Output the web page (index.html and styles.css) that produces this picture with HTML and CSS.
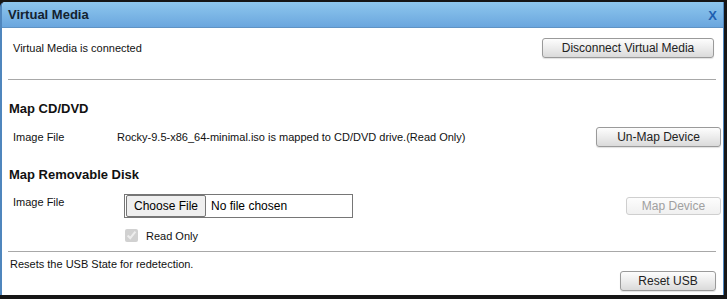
FILE: index.html
```html
<!DOCTYPE html>
<html lang="en">
<head>
    <meta charset="UTF-8">
    <meta name="viewport" content="width=device-width, initial-scale=1.0">
    <title>Virtual Media</title>
    <link rel="stylesheet" href="styles.css">
</head>
<body>
    <div class="dialog">
        <div class="titlebar">
            <span class="title">Virtual Media</span>
            <span class="close">X</span>
        </div>
        <div class="content">
            <div class="row status-row">
                <span class="status">Virtual Media is connected</span>
                <button class="btn btn-disconnect">Disconnect Virtual Media</button>
            </div>
            <hr class="sep">

            <h2 class="section">Map CD/DVD</h2>
            <div class="row cd-row">
                <span class="label">Image File</span>
                <span class="mapped">Rocky-9.5-x86_64-minimal.iso is mapped to CD/DVD drive.(Read Only)</span>
                <button class="btn btn-unmap">Un-Map Device</button>
            </div>

            <h2 class="section">Map Removable Disk</h2>
            <div class="row disk-row">
                <span class="label">Image File</span>
                <div class="file-box">
                    <span class="file-btn">Choose File</span>
                    <span class="file-name">No file chosen</span>
                </div>
                <button class="btn btn-map" disabled>Map Device</button>
            </div>
            <div class="readonly">
                <input type="checkbox" id="readonly" checked disabled>
                <label for="readonly">Read Only</label>
            </div>
            <hr class="sep sep-usb">

            <div class="usb-text">Resets the USB State for redetection.</div>
            <div class="usb-row">
                <button class="btn btn-reset">Reset USB</button>
            </div>
        </div>
    </div>
</body>
</html>
```

FILE: styles.css
```css
body {
    margin: 0;
    background-color: #161616;
    font-family: "Liberation Sans", Arial, sans-serif;
    font-size: 11px;
    color: #111;
}
.dialog {
    margin-top: 2px;
    width: 721px;
    height: 293px;
    background-color: #fff;
    border-left: 2px solid #4f86bd;
    border-right: 1px solid #4f86bd;
    border-top-left-radius: 5px;
    overflow: hidden;
}
.titlebar {
    height: 25px;
    display: flex;
    align-items: center;
    justify-content: space-between;
    padding: 0 6px 0 6px;
    background: linear-gradient(#8ec7ee, #6aa6de);
    border-bottom: 1px solid #5f93c4;
}
.title {
    font-size: 13px;
    font-weight: bold;
    color: #13222f;
}
.close {
    font-size: 13px;
    font-weight: bold;
    color: #1f5fb0;
    margin-top: 1px;
}
.content {
    padding: 0 0 0 6px;
}
.row {
    display: flex;
    align-items: center;
}
.status-row {
    height: 36px;
    padding-top: 2px;
    padding-left: 5px;
    padding-right: 9px;
    justify-content: space-between;
}
.sep {
    margin: 13px 7px 0 0;
    border: none;
    border-top: 1px solid #a8a8a8;
    height: 0;
}
.section {
    margin: 21px 0 0 1px;
    font-size: 13px;
    font-weight: bold;
}
.section + .disk-row {
    margin-top: 13px;
}
.label {
    width: 104px;
    padding-left: 5px;
}
.cd-row {
    margin-top: 11px;
    padding-right: 2px;
}
.cd-row + .section {
    margin-top: 20px;
}
.mapped {
    flex: 1;
}
.disk-row {
    align-items: flex-start;
    padding-right: 2px;
}
.disk-row .label {
    width: 111px;
    padding-top: 1px;
}
.file-box {
    width: 227px;
    height: 22px;
    border: 1px solid #767676;
    display: flex;
    align-items: center;
    font-size: 12px;
    margin-top: -1px;
}
.file-btn {
    height: 20px;
    line-height: 20px;
    padding: 0 7px;
    margin-left: 1px;
    background-color: #efefef;
    border: 1px solid #767676;
    border-radius: 2px;
    color: #000;
}
.file-name {
    padding-left: 5px;
    color: #000;
}
.readonly {
    display: flex;
    align-items: center;
    margin: 11px 0 0 116px;
}
.readonly input {
    margin: 0 8px 0 1px;
    width: 13px;
    height: 13px;
}
.sep-usb {
    margin-top: 9px;
    margin-left: 0;
}
.usb-text {
    margin-top: 6px;
    margin-left: 2px;
}
.usb-row {
    display: flex;
    justify-content: flex-end;
    padding-right: 7px;
    margin-top: 1px;
}
.btn {
    box-sizing: border-box;
    font-family: "Liberation Sans", Arial, sans-serif;
    font-size: 12px;
    color: #222;
    height: 20px;
    padding: 0;
    white-space: nowrap;
    border: 1px solid #9a9a9a;
    border-radius: 3px;
    background: linear-gradient(#fdfdfd, #ececec 50%, #dadada);
    box-shadow: 0 1px 1px rgba(0, 0, 0, 0.12);
}
.btn-disconnect {
    width: 172px;
}
.btn-unmap {
    width: 125px;
}
.btn-map {
    width: 95px;
    height: 18px;
    margin-left: auto;
    margin-top: 2px;
    color: #a0a0a0;
    border-color: #cfcfcf;
    background: linear-gradient(#fdfdfd, #f0f0f0);
    box-shadow: none;
}
.btn-reset {
    width: 96px;
}
```
